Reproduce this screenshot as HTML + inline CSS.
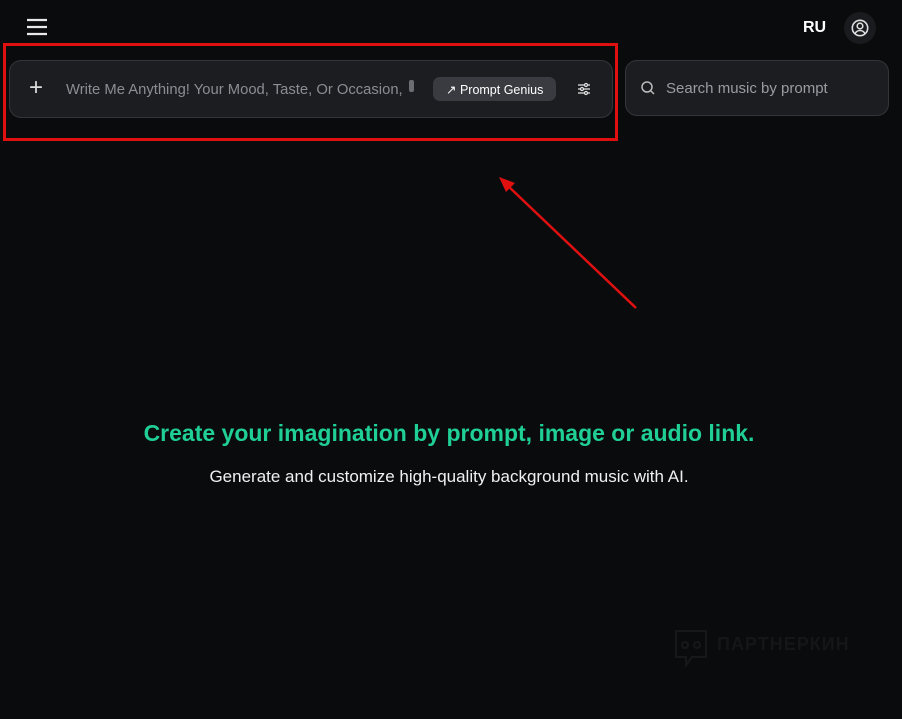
<!DOCTYPE html>
<html><head><meta charset="utf-8"><style>
html,body{margin:0;padding:0;width:902px;height:719px;background:#0a0b0d;overflow:hidden;font-family:"Liberation Sans",sans-serif;}
.abs{position:absolute}
.box{position:absolute;background:#1c1d21;border:1px solid #34353a;border-radius:12px;box-sizing:border-box}
</style></head><body>
<svg class="abs" style="left:26px;top:18px" width="22" height="18"><g stroke="#e8e8e8" stroke-width="2.2"><line x1="1" y1="2" x2="21" y2="2"/><line x1="1" y1="9" x2="21" y2="9"/><line x1="1" y1="16" x2="21" y2="16"/></g></svg>
<div class="abs" style="left:803px;top:19px;color:#fff;font-size:16px;font-weight:bold">RU</div>
<div class="abs" style="left:844px;top:12px;width:32px;height:32px;border-radius:50%;background:#1a1b1f"></div>
<svg class="abs" style="left:851px;top:19px" width="18" height="18" fill="none" stroke="#ddd" stroke-width="1.6"><circle cx="9" cy="9" r="7.7"/><circle cx="9" cy="7" r="2.8"/><path d="M4 14.5c1.5-2.5 3-3 5-3s3.5.5 5 3"/></svg>
<div class="box" style="left:9px;top:60px;width:604px;height:58px"></div>
<div class="abs" style="left:29px;top:75px;color:#ddd;font-size:24px;line-height:26px">+</div>
<div class="abs" style="left:66px;top:82px;color:#8b8d93;font-size:14.8px;white-space:nowrap">Write Me Anything! Your Mood, Taste, Or Occasion,</div>
<div class="abs" style="left:409px;top:80px;width:5px;height:12px;background:#6b6d72;border-radius:2px"></div>
<div class="abs" style="left:433px;top:77px;width:123px;height:24px;background:#3a3b40;border-radius:7px"></div>
<div class="abs" style="left:446px;top:82px;color:#fff;font-size:12.5px;white-space:nowrap">&#x2197;&#xFE0E; Prompt Genius</div>
<svg class="abs" style="left:577px;top:82px" width="14" height="14" stroke="#ddd" stroke-width="1.3" fill="none"><line x1="1" y1="3" x2="13" y2="3"/><line x1="1" y1="7" x2="13" y2="7"/><line x1="1" y1="11" x2="13" y2="11"/><circle cx="9" cy="3" r="1.5" fill="#1c1d21"/><circle cx="5" cy="7" r="1.5" fill="#1c1d21"/><circle cx="9" cy="11" r="1.5" fill="#1c1d21"/></svg>
<div class="box" style="left:625px;top:60px;width:264px;height:56px"></div>
<svg class="abs" style="left:641px;top:81px" width="14" height="14" fill="none" stroke="#bbb" stroke-width="1.5"><circle cx="6" cy="6" r="5"/><line x1="9.5" y1="9.5" x2="13" y2="13"/></svg>
<div class="abs" style="left:666px;top:80px;color:#9a9ca1;font-size:15px">Search music by prompt</div>
<div class="abs" style="left:3px;top:43px;width:615px;height:98px;border:3px solid #e01010;box-sizing:border-box"></div>
<svg class="abs" style="left:0;top:0" width="902" height="719"><line x1="636" y1="308" x2="507" y2="185" stroke="#e01010" stroke-width="2.5"/><polygon points="499,177 515,183 506,192" fill="#e01010"/></svg>
<div class="abs" style="left:0;width:898px;top:420px;text-align:center;color:#1fcf93;font-size:23px;font-weight:bold">Create your imagination by prompt, image or audio link.</div>
<div class="abs" style="left:0;width:898px;top:467px;text-align:center;color:#f0f0f0;font-size:17px">Generate and customize high-quality background music with AI.</div>
<svg class="abs" style="left:674px;top:629px" width="36" height="40" fill="none" stroke="#17181b" stroke-width="2"><path d="M2 2h30v26H18l-6 8v-8H2z"/><circle cx="11" cy="16" r="3"/><circle cx="23" cy="16" r="3"/></svg>
<div class="abs" style="left:717px;top:634px;color:#161619;font-size:18px;font-weight:bold;letter-spacing:1px">ПАРТНЕРКИН</div>
</body></html>
